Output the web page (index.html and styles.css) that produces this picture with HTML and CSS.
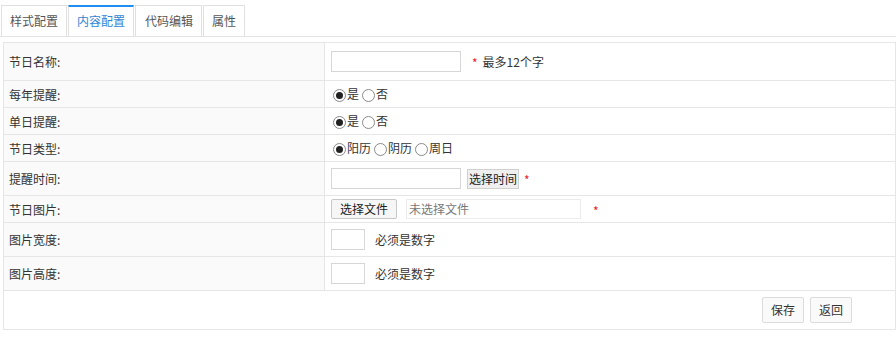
FILE: index.html
```html
<!DOCTYPE html>
<html lang="zh">
<head>
<meta charset="utf-8">
<link rel="stylesheet" href="styles.css">
</head>
<body>
<div class="tabs">
  <div class="tab">样式配置</div>
  <div class="tab active">内容配置</div>
  <div class="tab">代码编辑</div>
  <div class="tab">属性</div>
</div>
<table class="form">
  <tr class="r38">
    <td class="lab">节日名称:</td>
    <td class="val"><span class="input w130"></span><span class="star">*</span><span class="hint">最多12个字</span></td>
  </tr>
  <tr class="r27">
    <td class="lab">每年提醒:</td>
    <td class="val"><span class="radio on"></span>是<span class="radio"></span>否</td>
  </tr>
  <tr class="r27">
    <td class="lab">单日提醒:</td>
    <td class="val"><span class="radio on"></span>是<span class="radio"></span>否</td>
  </tr>
  <tr class="r27">
    <td class="lab">节日类型:</td>
    <td class="val"><span class="radio on"></span>阳历<span class="radio"></span>阴历<span class="radio"></span>周日</td>
  </tr>
  <tr class="r34">
    <td class="lab">提醒时间:</td>
    <td class="val"><span class="input w130"></span><span class="btn-time">选择时间</span><span class="star s2">*</span></td>
  </tr>
  <tr class="r27">
    <td class="lab">节日图片:</td>
    <td class="val"><span class="btn-file">选择文件</span><span class="filename">未选择文件</span><span class="star s3">*</span></td>
  </tr>
  <tr class="r34">
    <td class="lab">图片宽度:</td>
    <td class="val"><span class="input w34"></span><span class="hint h2">必须是数字</span></td>
  </tr>
  <tr class="r34">
    <td class="lab">图片高度:</td>
    <td class="val"><span class="input w34"></span><span class="hint h2">必须是数字</span></td>
  </tr>
  <tr class="r39">
    <td class="actions" colspan="2"><span class="btn">保存</span><span class="btn">返回</span></td>
  </tr>
</table>
</body>
</html>
```

FILE: styles.css
```css
* { box-sizing: border-box; }
body {
  margin: 0;
  background: #fff;
  font-family: "Noto Sans CJK SC", "Liberation Sans", sans-serif;
  font-size: 12px;
  color: #333;
}
.tabs {
  display: flex;
  gap: 1px;
  padding: 5px 0 0 1px;
  border-bottom: 1px solid #e3e3e3;
  height: 37px;
}
.tab {
  height: 31px;
  padding: 0 8px;
  border: 1px solid #e0e0e0;
  border-bottom: none;
  line-height: 29px;
  color: #555;
  background: #fff;
}
.tab:nth-child(3) { padding: 0 8px 0 9px; }
.tab.active {
  color: #2f86d6;
  border-top: 2px solid #1e8ff0;
  line-height: 28px;
}
.form {
  margin: 5px 0 0 3px;
  width: calc(100% - 3px);
  border-collapse: collapse;
  border: 1px solid #e6e6e6;
}
.form td {
  border: 1px solid #e6e6e6;
  padding: 0;
  vertical-align: middle;
}
.r38 { height: 38px; }
.r27 { height: 27px; }
.r34 { height: 34px; }
.r39 { height: 39px; }
.lab {
  width: 321px;
  background: #fafafa;
  padding-left: 5px !important;
  color: #333;
}
.val {
  padding-left: 6px !important;
  white-space: nowrap;
}
.val > span { vertical-align: middle; }
.input {
  display: inline-block;
  height: 21px;
  border: 1px solid #d6d6d6;
  background: #fff;
}
.w130 { width: 130px; }
.w34 { width: 34px; height: 21px; }
.star {
  color: #e8202a;
  margin-left: 11px;
  margin-right: 5px;
  font-size: 12px;
  position: relative;
  top: 1px;
}
.star.s2 { margin-left: 5px; }
.star.s3 { margin-left: 12px; }
.hint { color: #333; }
.hint.h2 { margin-left: 10px; }
.radio {
  display: inline-block;
  width: 13px;
  height: 13px;
  border: 1px solid #8a8a8a;
  border-radius: 50%;
  margin: 0 1px 0 3px;
  position: relative;
  top: -1px;
  background: #fff;
}
.radio:first-child { margin-left: 2px; }
.radio.on::after {
  content: "";
  position: absolute;
  left: 2px;
  top: 2px;
  width: 7px;
  height: 7px;
  border-radius: 50%;
  background: #222;
}
.btn-time {
  display: inline-block;
  height: 20px;
  line-height: 18px;
  padding: 0 1px;
  margin-left: 6px;
  border: 1px solid #d0d0d0;
  background: #efefef;
  color: #222;
}
.btn-file {
  display: inline-block;
  width: 66px;
  height: 20px;
  line-height: 18px;
  text-align: center;
  border: 1px solid #c8c8c8;
  border-radius: 2px;
  background: #f6f6f6;
  color: #222;
}
.filename {
  display: inline-block;
  width: 175px;
  height: 20px;
  line-height: 18px;
  margin-left: 9px;
  padding-left: 2px;
  border: 1px solid #ececec;
  color: #777;
}
.actions {
  text-align: right;
  padding-right: 43px !important;
}
.btn {
  display: inline-block;
  width: 42px;
  height: 26px;
  line-height: 24px;
  text-align: center;
  border: 1px solid #dcdcdc;
  border-radius: 2px;
  background: #fafafa;
  color: #333;
  margin-left: 6px;
}
```
